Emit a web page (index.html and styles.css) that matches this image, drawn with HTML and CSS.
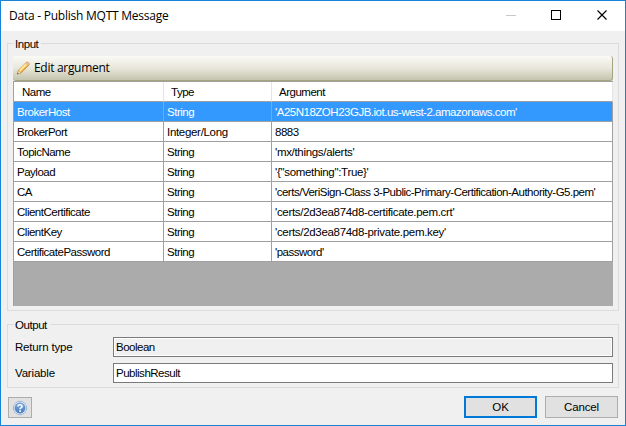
FILE: index.html
```html
<!DOCTYPE html>
<html lang="en">
<head>
<meta charset="utf-8">
<title>Data - Publish MQTT Message</title>
<link rel="stylesheet" href="styles.css">
</head>
<body>
<div class="window">
  <header class="titlebar">
    <h1 class="title">Data - Publish MQTT Message</h1>
    <svg class="controls" width="112" height="30" viewBox="0 0 112 30" fill="none" shape-rendering="crispEdges">
      <path d="M0 14.5h10" stroke="#c8c8c8"/>
      <rect x="45.500" y="9.500" width="9" height="9" stroke="#000"/>
      <path d="M91.500 9.500l9 9M100.500 9.500l-9 9" stroke="#000" stroke-width="1.2" shape-rendering="auto"/>
    </svg>
  </header>
  <main class="content">
    <section class="group input-group">
      <h2 class="legend">Input</h2>
      <div class="toolbar">
        <svg class="pencil" width="16" height="16" viewBox="-1 0 16 16">
          <path d="M1.500 13.800l1-3.600L9.900 2.800Q11.200 1.700 12.500 3Q13.700 4.200 12.600 5.500L5.300 12.700Z" fill="#f9cd66" stroke="#c78a38" stroke-width=".8"/>
          <path d="M3.700 10.500l6.900-6.900" stroke="#ffedab" stroke-width="1.500"/>
          <path d="M5.200 11.900l6.700-6.700" stroke="#e8a742" stroke-width="1"/>
          <path d="M9.700 3L10.600 2.200Q11.700 1.800 12.700 2.900Q13.500 3.900 13 4.900L12.200 5.900Z" fill="#f3cba5" stroke="#c99468" stroke-width=".6"/>
          <path d="M1.300 14l1-3.500 2.700 2.500Z" fill="#f6dfb9" stroke="#c08c4d" stroke-width=".5"/>
          <path d="M1 14.300l.5-1.600 1.200 1.200Z" fill="#5c4c38"/>
        </svg>
        <span class="tool-label">Edit argument</span>
      </div>
      <div class="grid">
        <div class="row head"><span>Name</span><span>Type</span><span>Argument</span></div>
        <div class="row selected"><span>BrokerHost</span><span>String</span><span>'A25N18ZOH23GJB.iot.us-west-2.amazonaws.com'</span></div>
        <div class="row"><span>BrokerPort</span><span class="wide">Integer/Long</span><span>8883</span></div>
        <div class="row"><span>TopicName</span><span>String</span><span class="wide">'mx/things/alerts'</span></div>
        <div class="row"><span>Payload</span><span>String</span><span class="wide">'{"something":True}'</span></div>
        <div class="row"><span>CA</span><span>String</span><span>'certs/VeriSign-Class 3-Public-Primary-Certification-Authority-G5.pem'</span></div>
        <div class="row"><span>ClientCertificate</span><span>String</span><span class="wide">'certs/2d3ea874d8-certificate.pem.crt'</span></div>
        <div class="row"><span>ClientKey</span><span>String</span><span class="wide">'certs/2d3ea874d8-private.pem.key'</span></div>
        <div class="row"><span>CertificatePassword</span><span>String</span><span>'password'</span></div>
      </div>
    </section>
    <section class="group output-group">
      <h2 class="legend">Output</h2>
      <div class="field"><span class="label">Return type</span><div class="box readonly">Boolean</div></div>
      <div class="field"><span class="label">Variable</span><div class="box">PublishResult</div></div>
    </section>
    <footer class="footer">
      <button class="help" aria-label="Help">
        <svg width="16" height="16" viewBox="0 0 16 16">
          <defs><linearGradient id="ball" x1="0" y1="0" x2="0" y2="1"><stop offset="0" stop-color="#87afe0"/><stop offset="1" stop-color="#4379bd"/></linearGradient></defs>
          <circle cx="8" cy="8" r="6.700" fill="#edf4fc" stroke="#8ba9d2" stroke-width=".8"/>
          <circle cx="8" cy="8" r="5.200" fill="url(#ball)" stroke="#5b87c1" stroke-width=".6"/>
          <path d="M6 6.500Q6 4.700 8 4.700T10 6.400Q10 7.300 8.900 7.900Q8.100 8.400 8.100 9.200" fill="none" stroke="#fff" stroke-width="1.600"/>
          <rect x="7.200" y="10.300" width="1.800" height="1.600" fill="#fff"/>
        </svg>
      </button>
      <button class="button primary">OK</button>
      <button class="button">Cancel</button>
    </footer>
  </main>
</div>
</body>
</html>
```
FILE: styles.css
```css
* { box-sizing: border-box; }

body {
  margin: 0;
  font: 11.5px/14px "Liberation Sans", Arial, sans-serif;
  letter-spacing: -0.49px;
  color: #000;
}

.window {
  display: flex;
  flex-direction: column;
  width: 626px;
  height: 426px;
  border: 1px solid #1883d7;
  background: #f0f0f0;
}

.titlebar {
  display: flex;
  align-items: center;
  justify-content: space-between;
  height: 30px;
  padding: 0 7px 0 8px;
  background: #fff;
}

.title {
  margin: 0;
  font: 12px/16px "Open Sans", "Noto Sans", sans-serif;
  letter-spacing: -0.24px;
}

.content {
  display: flex;
  flex-direction: column;
  padding: 12px 6px 0;
}

.group {
  width: 612px;
  border: 1px solid #dcdcdc;
  padding: 0 5px;
}

.input-group { height: 268px; }

.output-group {
  height: 64px;
  margin-top: 13px;
}

.legend {
  width: max-content;
  height: 14px;
  margin: -7px 0 0 1px;
  padding: 0 3px 0 1px;
  background: #f0f0f0;
  font: inherit;
  letter-spacing: -0.45px;
}

.toolbar {
  display: flex;
  align-items: center;
  gap: 3px;
  width: 600px;
  height: 25px;
  margin-top: 5px;
  padding-left: 2px;
  border-right: 1px solid #a5a47e;
  border-bottom: 1px solid #a3a37c;
  border-radius: 3px;
  background: linear-gradient(#fafaf6, #e8e7db 50%, #c5c4ad);
}

.tool-label {
  font: 12px/16px "Open Sans", "Noto Sans", sans-serif;
  letter-spacing: -0.3px;
}

.grid {
  width: 600px;
  height: 225px;
  background: #ababab;
  border-left: 1px solid #a0a0a0;
  border-top: 1px solid #a0a0a0;
}

.row {
  display: grid;
  grid-template-columns: 150px 108px 341px;
  height: 20px;
  background: #fff;
}

.row span {
  padding: 3px 0 0 3px;
  border-right: 1px solid #a0a0a0;
  border-bottom: 1px solid #a0a0a0;
  white-space: nowrap;
}

.row .wide { letter-spacing: -0.31px; }

.head span {
  padding-left: 7px;
  border-right-color: #e5e5e5;
}

.head span:first-child { padding-left: 8px; }

.row.selected { background: #3399ff; color: #fff; }

.field {
  display: flex;
  align-items: center;
  height: 20px;
  margin-top: 6px;
  padding-left: 1px;
}

.legend + .field { margin-top: 5px; }

.label {
  width: 99px;
  padding-left: 1px;
  letter-spacing: -0.18px;
}

.box {
  width: 500px;
  height: 20px;
  padding: 2px;
  border: 1px solid #7a7a7a;
  background: #fff;
}

.readonly {
  background: #f0f0f0;
  box-shadow: inset 0 0 0 1px #fff;
}

.footer {
  display: flex;
  gap: 8px;
  margin-top: 8px;
  padding: 0 1px;
}

.help, .button {
  padding: 0;
  border: 1px solid #adadad;
  background: #e1e1e1;
  color: #000;
  font: inherit;
}

.help {
  display: flex;
  align-items: center;
  justify-content: center;
  width: 24px;
  height: 21px;
  margin: 1px auto 0 0;
}

.button {
  width: 73px;
  height: 22px;
  letter-spacing: -0.15px;
}

.primary {
  border: 2px solid #0078d7;
  letter-spacing: 0;
}
```
